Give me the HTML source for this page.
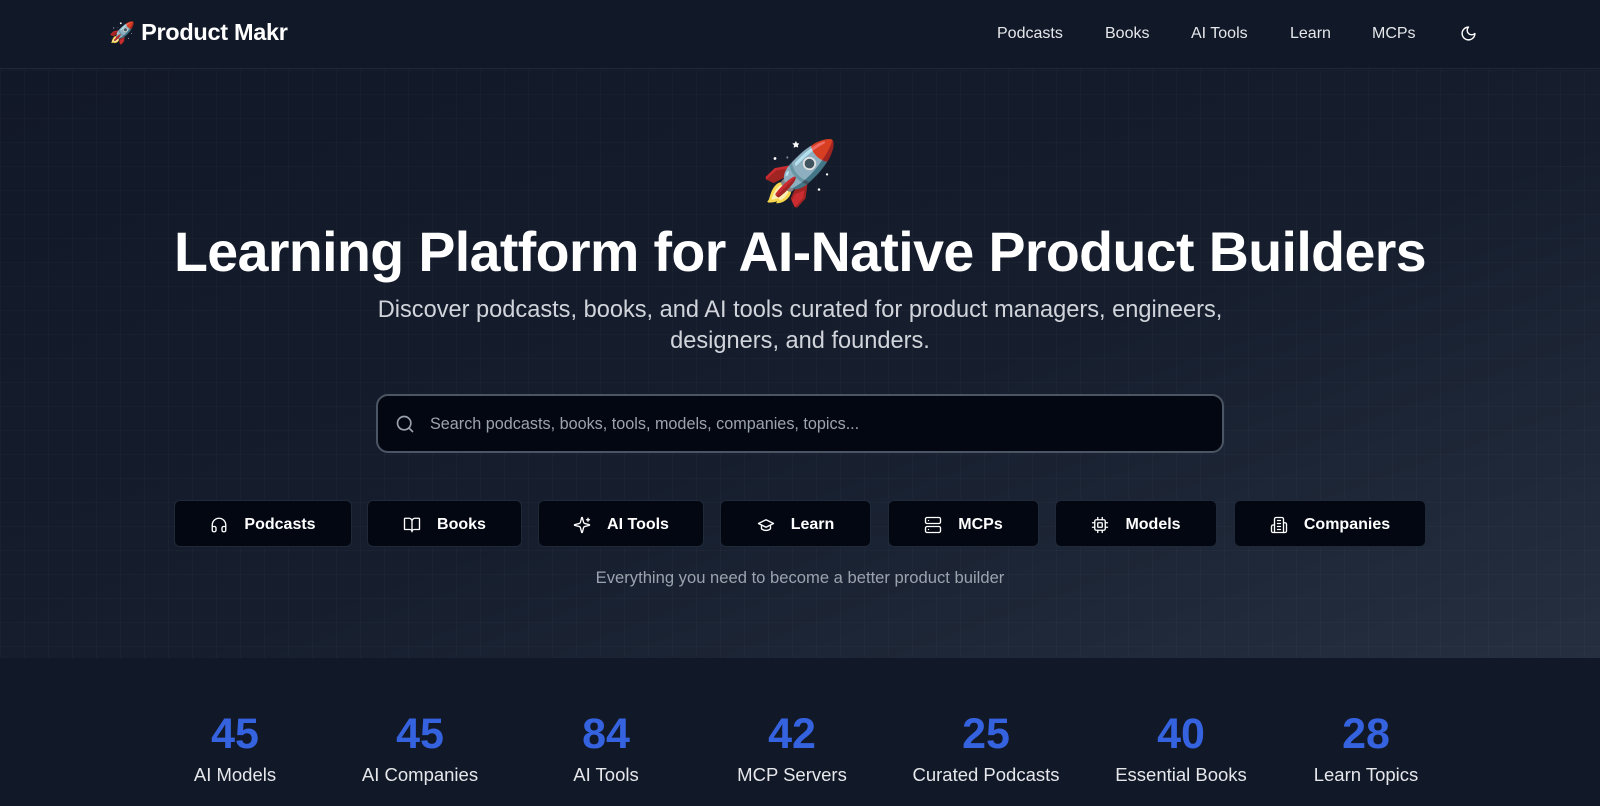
<!DOCTYPE html>
<html><head><meta charset="utf-8"><style>
*{margin:0;padding:0;box-sizing:border-box}
body{width:1600px;height:806px;overflow:hidden;background:#111827;font-family:"Liberation Sans",sans-serif;color:#fff}
.hdr{position:absolute;left:0;top:0;width:1600px;height:69px;background:#111827;border-bottom:1px solid #1f2937}
.logo{position:absolute;left:109px;top:19px;font-size:23.5px;font-weight:bold;letter-spacing:-0.3px}
.nav a{position:absolute;top:25px;font-size:16px;color:#e5e7eb;text-decoration:none;font-weight:500}
.hero{position:absolute;left:0;top:70px;width:1600px;height:588px;
background:linear-gradient(rgba(255,255,255,0.018) 1px,transparent 1px) 0 0/24px 24px,linear-gradient(90deg,rgba(255,255,255,0.018) 1px,transparent 1px) 0 0/24px 24px,linear-gradient(160deg,#111827 0%,#161e2e 55%,#252f3f 100%)}
.c{position:absolute;left:0;width:1600px;text-align:center}
h1{font-size:55.5px;font-weight:bold;letter-spacing:-0.6px}
.sub{font-size:23.6px;color:#d1d5db;line-height:31px}
.search{position:absolute;left:376px;top:394px;width:848px;height:59px;border:2px solid #4b5563;border-radius:12px;background:#030712}
.search span{position:absolute;left:52px;top:19px;font-size:16.2px;color:#9ca3af}
.btn{position:absolute;top:500px;height:47px;background:#030712;border:1px solid #1f2937;border-radius:6px;display:flex;align-items:center;justify-content:center;font-size:16px;font-weight:bold;color:#fff;gap:16px;padding-top:2px}
.btn svg{width:18px;height:18px;fill:none;stroke:#fff;stroke-width:1.8;stroke-linecap:round;stroke-linejoin:round}
.st{position:absolute;top:710px;width:220px;margin-left:-110px;text-align:center}
.st b{display:block;font-size:43px;color:#3563e0;line-height:48px}
.st span{display:block;font-size:18.5px;color:#e5e7eb;margin-top:6px}
</style></head><body>
<div class="hdr">
<div class="logo"><span style="font-family:'Noto Color Emoji',sans-serif;font-size:21px">🚀</span>&nbsp;Product Makr</div>
<div class="nav">
<a style="left:997px">Podcasts</a><a style="left:1105px">Books</a><a style="left:1191px">AI Tools</a><a style="left:1290px">Learn</a><a style="left:1372px">MCPs</a>
<svg style="position:absolute;left:1460px;top:25px" width="17" height="17" viewBox="0 0 24 24" fill="none" stroke="#fff" stroke-width="2" stroke-linecap="round" stroke-linejoin="round"><path d="M12 3a6 6 0 0 0 9 9 9 9 0 1 1-9-9Z"/></svg>
</div></div>
<div class="hero"></div>
<div class="c" style="top:138px;font-size:62px;line-height:72px">🚀</div>
<div class="c" style="top:220px"><h1>Learning Platform for AI-Native Product Builders</h1></div>
<div class="c sub" style="top:295px">Discover podcasts, books, and AI tools curated for product managers, engineers,<br>designers, and founders.</div>
<div class="search"><svg style="position:absolute;left:17px;top:18px" width="20" height="20" viewBox="0 0 24 24" fill="none" stroke="#9ca3af" stroke-width="2" stroke-linecap="round"><circle cx="11" cy="11" r="8"/><path d="m21 21-4.3-4.3"/></svg><span>Search podcasts, books, tools, models, companies, topics...</span></div>
<div class="btn" style="left:174px;width:178px"><svg viewBox="0 0 24 24"><path d="M3 14h3a2 2 0 0 1 2 2v3a2 2 0 0 1-2 2H5a2 2 0 0 1-2-2v-7a9 9 0 0 1 18 0v7a2 2 0 0 1-2 2h-1a2 2 0 0 1-2-2v-3a2 2 0 0 1 2-2h3"/></svg>Podcasts</div>
<div class="btn" style="left:367px;width:155px"><svg viewBox="0 0 24 24"><path d="M12 7v14M3 18a1 1 0 0 1-1-1V4a1 1 0 0 1 1-1h5a4 4 0 0 1 4 4 4 4 0 0 1 4-4h5a1 1 0 0 1 1 1v13a1 1 0 0 1-1 1h-6a3 3 0 0 0-3 3 3 3 0 0 0-3-3z"/></svg>Books</div>
<div class="btn" style="left:538px;width:166px"><svg viewBox="0 0 24 24"><path d="M9.9 15.5A2 2 0 0 0 8.5 14.1L2.4 12.5a.5.5 0 0 1 0-1l6.1-1.6A2 2 0 0 0 9.9 8.5L11.5 2.4a.5.5 0 0 1 1 0l1.6 6.1a2 2 0 0 0 1.4 1.4l6.1 1.6a.5.5 0 0 1 0 1l-6.1 1.6a2 2 0 0 0-1.4 1.4l-1.6 6.1a.5.5 0 0 1-1 0z"/><path d="M20 3v4M22 5h-4"/></svg>AI Tools</div>
<div class="btn" style="left:720px;width:151px"><svg viewBox="0 0 24 24"><path d="M22 10 12 5 2 10l10 5 10-5z"/><path d="M6 12v5c3 3 9 3 12 0v-5"/></svg>Learn</div>
<div class="btn" style="left:888px;width:151px"><svg viewBox="0 0 24 24"><rect x="2" y="2" width="20" height="8" rx="2"/><rect x="2" y="14" width="20" height="8" rx="2"/><path d="M6 6h.01M6 18h.01"/></svg>MCPs</div>
<div class="btn" style="left:1055px;width:162px"><svg viewBox="0 0 24 24"><rect x="5" y="5" width="14" height="14" rx="2"/><rect x="9" y="9" width="6" height="6" rx="1"/><path d="M9 2v3M15 2v3M9 19v3M15 19v3M2 9h3M2 15h3M19 9h3M19 15h3"/></svg>Models</div>
<div class="btn" style="left:1234px;width:192px"><svg viewBox="0 0 24 24"><path d="M6 22V4a2 2 0 0 1 2-2h8a2 2 0 0 1 2 2v18Z"/><path d="M6 12H4a2 2 0 0 0-2 2v6a2 2 0 0 0 2 2h2M18 9h2a2 2 0 0 1 2 2v9a2 2 0 0 1-2 2h-2M10 6h4M10 10h4M10 14h4M10 18h4"/></svg>Companies</div>
<div class="c" style="top:568px;font-size:16.6px;color:#9ca3af">Everything you need to become a better product builder</div>
<div class="st" style="left:235px"><b>45</b><span>AI Models</span></div>
<div class="st" style="left:420px"><b>45</b><span>AI Companies</span></div>
<div class="st" style="left:606px"><b>84</b><span>AI Tools</span></div>
<div class="st" style="left:792px"><b>42</b><span>MCP Servers</span></div>
<div class="st" style="left:986px"><b>25</b><span>Curated Podcasts</span></div>
<div class="st" style="left:1181px"><b>40</b><span>Essential Books</span></div>
<div class="st" style="left:1366px"><b>28</b><span>Learn Topics</span></div>
</body></html>
